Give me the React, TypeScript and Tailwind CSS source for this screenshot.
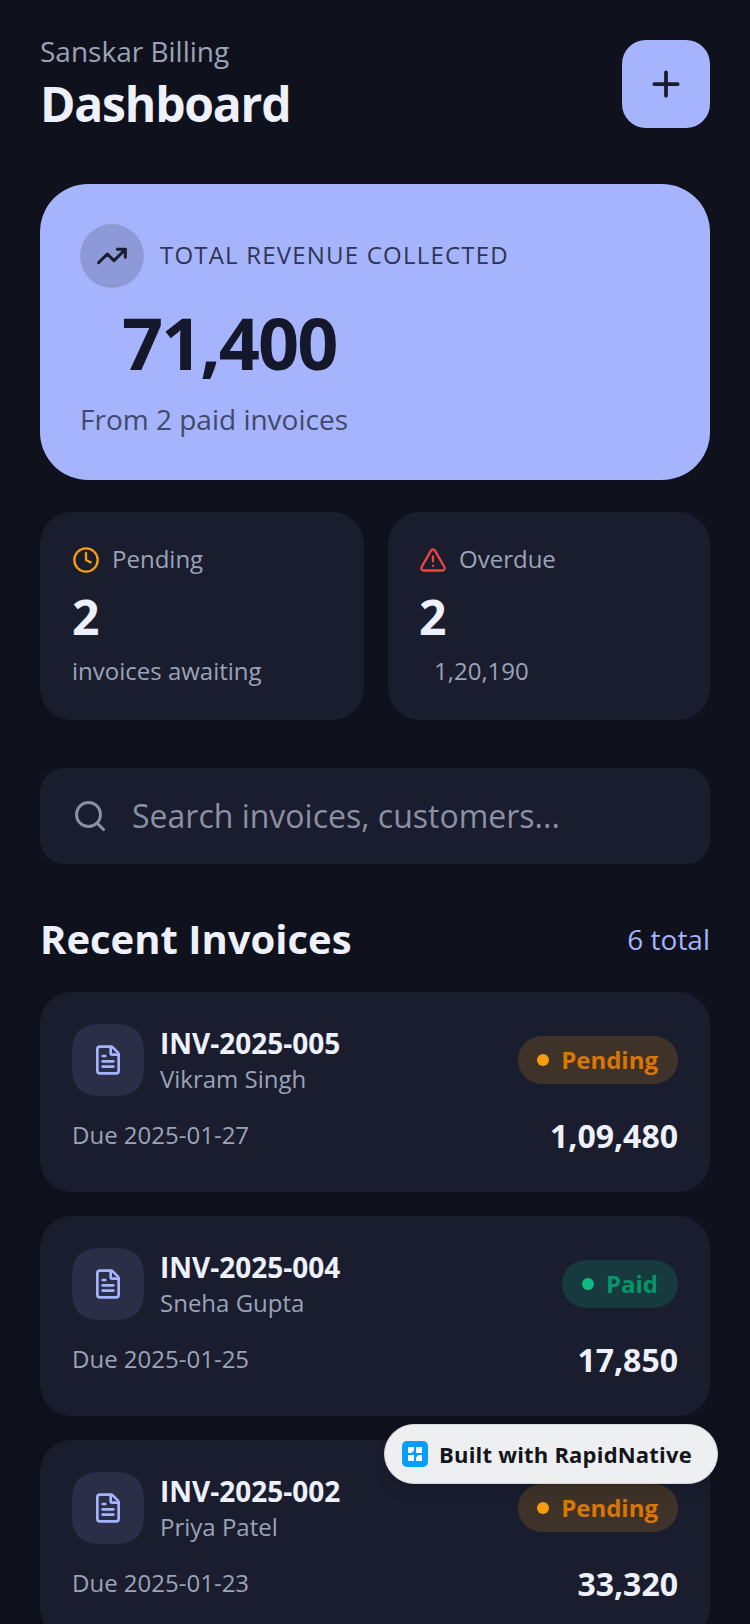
import { Plus, TrendingUp, Clock, TriangleAlert, Search, FileText } from "lucide-react";

const font = { fontFamily: '"Open Sans", sans-serif' };

function Invoice({ id, name, due, amount, paid }: { id: string; name: string; due: string; amount: string; paid?: boolean }) {
  return (
    <div className="rounded-[32px] bg-[#1a1d2e] p-8 h-[200px] shrink-0">
      <div className="flex items-center justify-between h-[72px]">
        <div className="flex items-center gap-4">
          <div className="w-[72px] h-[72px] rounded-[24px] bg-[#2a2e47] flex items-center justify-center">
            <FileText size={32} strokeWidth={2} className="text-[#a5b4fc]" />
          </div>
          <div className="flex flex-col">
            <span className="text-[28px] leading-[38px] font-bold text-[#eef0fb]">{id}</span>
            <span className="text-[24px] leading-[34px] text-[#9ca3b8]">{name}</span>
          </div>
        </div>
        <div className={`h-12 rounded-full pr-5 flex items-center gap-3 ${paid ? "bg-[#173a3e] pl-5" : "bg-[#3f3329] pl-[19px]"}`}>
          <span className={`w-3 h-3 rounded-full ${paid ? "bg-[#10b981]" : "bg-[#f59e0b]"}`} />
          <span className={`text-[24px] font-bold leading-8 ${paid ? "text-[#059669]" : "text-[#d97706]"}`}>{paid ? "Paid" : "Pending"}</span>
        </div>
      </div>
      <div className="flex items-center justify-between mt-[20px]">
        <span className="text-[24px] leading-8 text-[#9ca3b8] -mt-[2px]">{due}</span>
        <span className="text-[32px] leading-10 font-bold text-[#eef0fb]">{amount}</span>
      </div>
    </div>
  );
}

export default function App() {
  return (
    <div style={font} className="relative h-[1624px] overflow-hidden bg-[#0f111c] px-10 pt-[31px]">
      <header className="flex items-start justify-between h-[97px]">
        <div className="flex flex-col">
          <span className="text-[28px] leading-[40px] text-[#9ca3b8]">Sanskar Billing</span>
          <span className="text-[48px] leading-[56px] font-bold tracking-[-1.2px] text-[#eef0fb] mt-[5px]">Dashboard</span>
        </div>
        <button className="mt-[9px] w-[88px] h-[88px] rounded-[24px] bg-[#a5b4fc] flex items-center justify-center">
          <Plus size={40} strokeWidth={2.25} className="text-[#1a1d2e]" />
        </button>
      </header>

      <section className="mt-[56px] h-[296px] rounded-[48px] bg-[#a5b4fc] p-10">
        <div className="flex items-center gap-4">
          <div className="w-16 h-16 rounded-full bg-[#8e99d8] flex items-center justify-center">
            <TrendingUp size={32} strokeWidth={2.25} className="text-[#1a1d2e]" />
          </div>
          <span className="text-[24px] tracking-[1.2px] text-[#2f3452] -mt-[3px]">TOTAL REVENUE COLLECTED</span>
        </div>
        <div className="mt-[9px] pl-[42px] text-[72px] leading-[90px] font-bold tracking-[-2px] text-[#15172a]">71,400</div>
        <div className="mt-[12px] text-[28px] leading-[40px] text-[#42486b]">From 2 paid invoices</div>
      </section>

      <section className="mt-8 flex gap-[24px]">
        <div className="w-[324px] h-[208px] rounded-[32px] bg-[#1a1d2e] p-8">
          <div className="flex items-center gap-3 h-8">
            <Clock size={28} strokeWidth={2} className="text-[#f59e0b]" />
            <span className="text-[24px] text-[#9ca3b8] -mt-[2px]">Pending</span>
          </div>
          <div className="mt-[13px] text-[48px] leading-[56px] font-bold text-[#eef0fb]">2</div>
          <div className="mt-[10px] text-[24px] leading-8 text-[#9ca3b8]">invoices awaiting</div>
        </div>
        <div className="flex-1 h-[208px] rounded-[32px] bg-[#1a1d2e] py-8 pl-[31px] pr-8">
          <div className="flex items-center gap-3 h-8">
            <TriangleAlert size={28} strokeWidth={2} className="text-[#ef4444]" />
            <span className="text-[24px] text-[#9ca3b8] -mt-[2px]">Overdue</span>
          </div>
          <div className="mt-[13px] text-[48px] leading-[56px] font-bold text-[#eef0fb]">2</div>
          <div className="mt-[10px] pl-[15px] text-[24px] leading-8 text-[#9ca3b8]">1,20,190</div>
        </div>
      </section>

      <section className="mt-12 h-24 rounded-[24px] bg-[#1a1d2e] px-8 flex items-center gap-6">
        <Search size={36} strokeWidth={2} className="text-[#8b90a5]" />
        <span className="text-[32px] text-[#8b90a5]">Search invoices, customers...</span>
      </section>

      <section className="mt-[45px] flex items-center justify-between h-[60px]">
        <span className="text-[40px] font-bold text-[#eef0fb]">Recent Invoices</span>
        <span className="text-[28px] text-[#a5b4fc]">6 total</span>
      </section>

      <section className="mt-[23px] flex flex-col gap-6">
        <Invoice id="INV-2025-005" name="Vikram Singh" due="Due 2025-01-27" amount="1,09,480" />
        <Invoice id="INV-2025-004" name="Sneha Gupta" due="Due 2025-01-25" amount="17,850" paid />
        <Invoice id="INV-2025-002" name="Priya Patel" due="Due 2025-01-23" amount="33,320" />
      </section>

      <div className="absolute left-[384px] top-[1424px] w-[334px] h-[60px] rounded-full bg-[#eeeff1] border border-[#d5d7dd] shadow-lg flex items-center pl-[17px] gap-[11px]">
        <svg width="26" height="26" viewBox="0 0 26 26">
          <rect width="26" height="26" rx="5" fill="#0a9dff" />
          <path d="M6 6h6v3.5l-2.5 2.5H6zM14 6h6v6h-6zM6 14h6v6H6zM16.5 14H20v6h-6v-3.5z" fill="#fff" />
        </svg>
        <span className="text-[22px] font-bold tracking-[0.2px] text-[#14151a]">Built with RapidNative</span>
      </div>
    </div>
  );
}
